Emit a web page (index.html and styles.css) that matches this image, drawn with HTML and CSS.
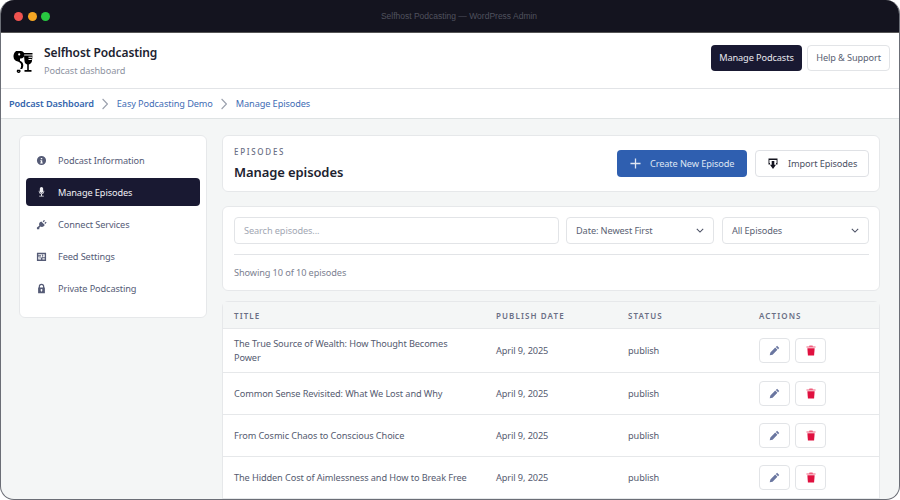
FILE: index.html
```html
<!DOCTYPE html>
<html lang="en">
<head>
<meta charset="utf-8">
<title>Selfhost Podcasting — WordPress Admin</title>
<link rel="stylesheet" href="styles.css">
</head>
<body>
<div class="window">
  <div class="titlebar">
    <div class="dots"><span class="dot red"></span><span class="dot amber"></span><span class="dot green"></span></div>
    <div class="wintitle">Selfhost Podcasting — WordPress Admin</div>
  </div>
  <header class="topbar">
    <div class="brand">
      <svg class="logo" viewBox="0 0 22 24" width="22" height="24" aria-hidden="true">
        <path fill="#000" d="M5 1h3.500a3.500 3.500 0 0 1 0 7.500H8v2.200c2 .8 3.300 2.400 3.300 4.600 0 1.400-.4 2.600-1.100 3.600h-2c.6-1 1-2.200 1-3.500 0-2-1.300-3-3.200-3.800C3.500 11 1.500 9.500 1.500 6.500 1.500 3.500 3 1 5 1Zm2.200 2.300a1 1 0 1 0 0 2.200 1 1 0 0 0 0-2.200Z"/>
        <path fill="none" stroke="#000" stroke-width="1.300" d="M5.500 20.500h2.300a1.300 1.300 0 1 1-2.300 0Z"/>
        <path fill="#000" d="M12 3h8.500v1.500H12zM12 5.500h8.500l-.5 5.500c-.3 2-1.700 3-3.200 3.400V20h2.700v1.800h-7V20h2.700v-5.600c-1.500-.5-2.700-1.700-2.700-3.400Z"/>
        <path fill="#fff" d="M16.500 6.800h3.500v1h-3.500zM16.500 9h3.200v1h-3.200z"/>
      </svg>
      <div class="brandtext">
        <div class="brandname">Selfhost Podcasting</div>
        <div class="brandsub">Podcast dashboard</div>
      </div>
    </div>
    <div class="topactions">
      <a class="btn btn-dark">Manage Podcasts</a>
      <a class="btn btn-light">Help &amp; Support</a>
    </div>
  </header>
  <nav class="crumbs">
    <a class="crumb strong">Podcast Dashboard</a>
    <svg class="sep" viewBox="0 0 6 12" width="6" height="12"><path d="M.6 1l4.800 5-4.800 5" fill="none" stroke="#9aa0ad" stroke-width="1.100"/></svg>
    <a class="crumb">Easy Podcasting Demo</a>
    <svg class="sep" viewBox="0 0 6 12" width="6" height="12"><path d="M.6 1l4.800 5-4.800 5" fill="none" stroke="#9aa0ad" stroke-width="1.100"/></svg>
    <a class="crumb">Manage Episodes</a>
  </nav>
  <div class="content">
    <aside class="sidebar card">
      <a class="navitem">
        <svg viewBox="0 0 12 12" width="11" height="11"><path fill="currentColor" fill-rule="evenodd" d="M6 1a5 5 0 1 1 0 10A5 5 0 0 1 6 1Zm-.8 2.200v1.500h1.600V3.200Zm-.5 2.400v1h.5v1.600h-.5v1h2.600v-1h-.5V5.600Z"/></svg>
        <span>Podcast Information</span>
      </a>
      <a class="navitem active">
        <svg viewBox="0 0 12 12" width="11" height="12"><path fill="currentColor" d="M6 .5a1.800 1.800 0 0 1 1.800 1.800v3a1.800 1.800 0 0 1-3.600 0v-3A1.800 1.800 0 0 1 6 .5ZM3 4.500h.8v1a2.200 2.200 0 0 0 4.400 0v-1H9v1a3 3 0 0 1-2.500 2.900v1.600H8.500v1h-5v-1h2V8.400A3 3 0 0 1 3 5.500Z"/></svg>
        <span>Manage Episodes</span>
      </a>
      <a class="navitem">
        <svg viewBox="0 0 12 12" width="11" height="11"><path fill="currentColor" d="M5.800 2.800l3.800 3.800-1.200 1.200c-1 1-2.400 1.100-3.500.5L3.600 9.600v1.600H1V9.200l1.500-1.100L3.700 7c-.6-1.100-.4-2.500.6-3.500Zm1.500-.3L8.800 1l1 1-1.500 1.500Zm1.800 1.900 1.500-1.500 1 1-1.500 1.500Z"/></svg>
        <span>Connect Services</span>
      </a>
      <a class="navitem">
        <svg viewBox="0 0 12 12" width="11" height="11"><path fill="currentColor" fill-rule="evenodd" d="M1 1.800h10v9H1ZM2.500 3.500v1.100h3V6h-3v3.200h3V8h-2V7.100h3V3.500Zm4.500 0v1.100h1v1.100H7v1.100h2.500V3.500ZM7 8v1.200h2.500V8Z"/></svg>
        <span>Feed Settings</span>
      </a>
      <a class="navitem">
        <svg viewBox="0 0 12 12" width="11" height="11"><path fill="currentColor" fill-rule="evenodd" d="M6 .8a3 3 0 0 1 3 3V5h.7v6.200H2.300V5H3V3.800a3 3 0 0 1 3-3Zm0 1.300a1.700 1.700 0 0 0-1.700 1.700V5h3.400V3.800A1.700 1.700 0 0 0 6 2.100Zm0 4.400a1 1 0 0 0-.5 1.900v1h1v-1A1 1 0 0 0 6 6.500Z"/></svg>
        <span>Private Podcasting</span>
      </a>
    </aside>
    <main class="main">
      <section class="card pagehead">
        <div>
          <div class="eyebrow">EPISODES</div>
          <h1 class="pagetitle">Manage episodes</h1>
        </div>
        <div class="headactions">
          <a class="btn-lg btn-primary">
            <svg viewBox="0 0 12 12" width="11" height="11"><path d="M6 .5v11M.5 6h11" fill="none" stroke="currentColor" stroke-width="1.400"/></svg>
            Create New Episode
          </a>
          <a class="btn-lg btn-outline">
            <svg viewBox="0 0 10 12" width="10" height="12"><path fill="#14141f" d="M.5.5h9v6H8V5h.6V2H1.400v3H2v1.500H.5ZM3.700 3h2.600v3.800H8L5 11 2 6.800h1.700Z"/></svg>
            Import Episodes
          </a>
        </div>
      </section>
      <section class="card filters">
        <div class="filterrow">
          <div class="field search">Search episodes...</div>
          <div class="field select date"><span>Date: Newest First</span><svg viewBox="0 0 10 6" width="8" height="5"><path d="M1 1l4 4 4-4" fill="none" stroke="#4a4f63" stroke-width="1.300"/></svg></div>
          <div class="field select kind"><span>All Episodes</span><svg viewBox="0 0 10 6" width="8" height="5"><path d="M1 1l4 4 4-4" fill="none" stroke="#4a4f63" stroke-width="1.300"/></svg></div>
        </div>
        <div class="showing">Showing 10 of 10 episodes</div>
      </section>
      <section class="tablecard">
        <div class="row thead"><div>TITLE</div><div>PUBLISH DATE</div><div>STATUS</div><div>ACTIONS</div></div>
        <div class="row tall"><div class="t">The True Source of Wealth: How Thought Becomes Power</div><div>April 9, 2025</div><div>publish</div><div class="acts"><a class="iconbtn"><svg width="11" height="11"><use href="#pen"/></svg></a><a class="iconbtn"><svg width="10" height="11"><use href="#trash"/></svg></a></div></div>
        <div class="row"><div class="t">Common Sense Revisited: What We Lost and Why</div><div>April 9, 2025</div><div>publish</div><div class="acts"><a class="iconbtn"><svg width="11" height="11"><use href="#pen"/></svg></a><a class="iconbtn"><svg width="10" height="11"><use href="#trash"/></svg></a></div></div>
        <div class="row"><div class="t">From Cosmic Chaos to Conscious Choice</div><div>April 9, 2025</div><div>publish</div><div class="acts"><a class="iconbtn"><svg width="11" height="11"><use href="#pen"/></svg></a><a class="iconbtn"><svg width="10" height="11"><use href="#trash"/></svg></a></div></div>
        <div class="row"><div class="t">The Hidden Cost of Aimlessness and How to Break Free</div><div>April 9, 2025</div><div>publish</div><div class="acts"><a class="iconbtn"><svg width="11" height="11"><use href="#pen"/></svg></a><a class="iconbtn"><svg width="10" height="11"><use href="#trash"/></svg></a></div></div>
      </section>
    </main>
  </div>
</div>
<svg class="defs" width="0" height="0" aria-hidden="true">
  <symbol id="pen" viewBox="0 0 12 12"><path fill="#6a76a0" d="M8.800.8l2.400 2.400-1.300 1.300-2.400-2.400ZM6.800 2.800l2.400 2.400-5.300 5.300-3.100.7.700-3.100Z"/></symbol>
  <symbol id="trash" viewBox="0 0 11 12"><path fill="#f0607f" d="M3.800.5h3.400l.4 1h2.900v1.300H.5V1.500h2.900Z"/><path fill="#e0103f" d="M1.500 3.500h8l-.6 8H2.100Z"/></symbol>
</svg>
</body>
</html>
```
FILE: styles.css
```css
* { box-sizing: border-box; }
html, body { margin: 0; padding: 0; background: #fff; }
body { width: 900px; height: 500px; overflow: hidden; font-family: "Noto Sans", "Liberation Sans", sans-serif; font-size: 9.200px; letter-spacing: -0.1px; color: #4a4f63; }
a { text-decoration: none; color: inherit; }
.defs { position: absolute; }
.window { width: 900px; height: 500px; border: 1px solid #6b6e76; border-top: 0; border-radius: 14px; overflow: hidden; background: #f4f6f6; display: flex; flex-direction: column; }
.titlebar { height: 33px; flex: none; background: #14141f; display: flex; align-items: center; position: relative; border-bottom: 1px solid #555; padding-left: 13px; }
.dots { display: flex; gap: 4.500px; }
.dot { width: 9px; height: 9px; border-radius: 50%; }
.red { background: #ef5350; }
.amber { background: #f5a623; }
.green { background: #28c840; }
.wintitle { position: absolute; left: 18px; right: 0; top: 11px; text-align: center; font-family: "Liberation Sans", sans-serif; font-size: 8.500px; letter-spacing: 0; line-height: 11px; color: #50525e; }
.topbar { height: 56px; flex: none; background: #fff; border-bottom: 1px solid #e2e4e7; display: flex; align-items: center; justify-content: space-between; padding: 0 9px 0 11px; }
.brand { display: flex; align-items: center; gap: 10px; }
.logo { margin-top: 2px; }
.brandname { font-size: 12px; line-height: 16px; font-weight: 600; color: #20222f; }
.brandsub { line-height: 13px; margin-top: 3px; color: #8e93a1; }
.topactions { display: flex; gap: 5px; margin-bottom: 6px; }
.btn { display: flex; align-items: center; height: 26px; padding: 0 8px; border-radius: 4px; }
.btn-dark { width: 91px; background: #191932; color: #e8e8ee; }
.btn-light { background: #fff; border: 1px solid #e2e4e7; color: #5a5f73; }
.crumbs { height: 30px; flex: none; background: #fff; border-bottom: 1px solid #dfe3e4; display: flex; align-items: center; padding-left: 8px; gap: 8.500px; color: #3f6db5; }
.crumb.strong { font-weight: 600; color: #3565ad; }
.content { flex: 1; min-height: 0; display: flex; align-items: flex-start; gap: 15px; padding: 16px 19px 0 18px; }
.card { background: #fff; border: 1px solid #e6e8ea; border-radius: 6px; }
.sidebar { width: 188px; flex: none; height: 183px; padding: 10px 6px; display: flex; flex-direction: column; gap: 4px; }
.navitem { height: 28px; display: flex; align-items: center; gap: 11px; padding-left: 10px; border-radius: 4px; color: #555b76; }
.navitem.active { background: #191932; color: #f0f0f4; }
.main { width: 658px; flex: none; display: flex; flex-direction: column; gap: 14px; }
.pagehead { height: 57px; display: flex; align-items: center; justify-content: space-between; padding: 0 10px 0 11px; }
.eyebrow { font-size: 8px; font-weight: 500; line-height: 11px; letter-spacing: 1.700px; color: #6a6f85; }
.pagetitle { margin: 6px 0 0; font-size: 13px; line-height: 18px; font-weight: 600; color: #20222f; }
.headactions { display: flex; gap: 8px; }
.btn-lg { height: 27px; display: flex; align-items: center; border-radius: 4px; }
.btn-primary { width: 130px; padding-left: 13px; gap: 9px; background: #2f5fb0; color: #dfe6f3; }
.btn-outline { width: 114px; padding-left: 12px; gap: 10px; background: #fff; border: 1px solid #dfe1e5; color: #4a4f63; }
.filters { height: 85px; padding: 10px 10px 0 11px; }
.filterrow { display: flex; gap: 8px; padding-bottom: 10px; border-bottom: 1px solid #e2e4e7; }
.field { height: 27px; border: 1px solid #e2e4e7; border-radius: 4px; display: flex; align-items: center; padding: 0 9px; }
.search { flex: 1; margin-right: -1px; color: #a2a7b3; }
.select { justify-content: space-between; color: #5a5f73; }
.date { width: 148px; }
.kind { width: 147px; }
.showing { margin-top: 11px; line-height: 13px; color: #7c8191; }
.tablecard { background: #fff; border: 1px solid #e6e8ea; border-radius: 6px 6px 0 0; margin-top: -4px; flex: none; }
.row { display: grid; grid-template-columns: 262px 132px 131px 1fr; align-items: center; min-height: 42px; padding: 0 11px; border-bottom: 1px solid #e6e8ea; color: #555b70; }
.row.tall { min-height: 44px; }
.thead { min-height: 27px; background: #f4f6f6; font-size: 8px; letter-spacing: 1.100px; font-weight: 600; color: #6a6f85; }
.t { line-height: 14px; padding-right: 25px; }
.acts { display: flex; gap: 5px; }
.iconbtn { width: 31px; height: 25px; display: flex; align-items: center; justify-content: center; background: #fff; border: 1px solid #e2e4e7; border-radius: 4px; }
```
